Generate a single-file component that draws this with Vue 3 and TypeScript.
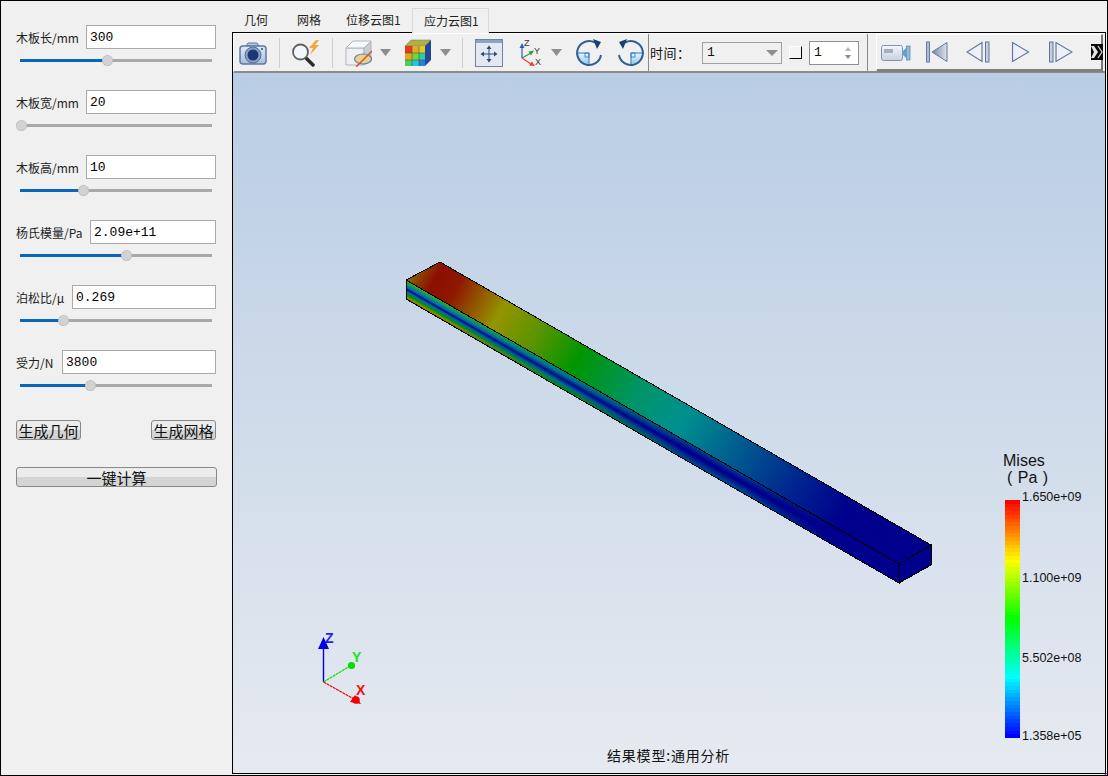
<script setup lang="ts">
interface Field { label: string; value: string; labelWidth: number; pos: number }
const fields: Field[] = [
  { label: '木板长/mm', value: '300', labelWidth: 70, pos: 87 },
  { label: '木板宽/mm', value: '20', labelWidth: 70, pos: 1 },
  { label: '木板高/mm', value: '10', labelWidth: 70, pos: 63 },
  { label: '杨氏模量/Pa', value: '2.09e+11', labelWidth: 74, pos: 106 },
  { label: '泊松比/μ', value: '0.269', labelWidth: 56, pos: 43 },
  { label: '受力/N', value: '3800', labelWidth: 46, pos: 70 },
]
const tabs = ['几何', '网格', '位移云图1', '应力云图1']
const bands: string[] = Array.from({ length: 64 }, (_, i) => `hsl(${Math.round((i / 63) * 240)}, 100%, 50%)`)
const ticks = [
  { text: '1.650e+09', top: 0 },
  { text: '1.100e+09', top: 81 },
  { text: '5.502e+08', top: 161 },
  { text: '1.358e+05', top: 239 },
]
</script>

<template>
  <div class="window">
    <aside class="side">
      <div v-for="f in fields" :key="f.label" class="field">
        <div class="row">
          <span class="lbl" :style="{ width: f.labelWidth + 'px' }">{{ f.label }}</span>
          <input class="inp" :value="f.value" readonly />
        </div>
        <div class="slider">
          <div class="fill" :style="{ width: f.pos + 'px' }"></div>
          <div class="thumb" :style="{ left: f.pos - 5 + 'px' }"></div>
        </div>
      </div>
      <div class="btns">
        <button class="btn">生成几何</button>
        <button class="btn">生成网格</button>
      </div>
      <button class="btn wide">一键计算</button>
    </aside>

    <main class="main">
      <div class="tabs">
        <div v-for="(t, i) in tabs" :key="t" class="tab" :class="{ active: i === 3 }">{{ t }}</div>
      </div>
      <div class="frame">
        <div class="toolbar">
          <svg class="ic ml5" width="28" height="26" viewBox="0 0 28 26">
            <defs><linearGradient id="cam" x1="0" y1="0" x2="0" y2="1"><stop offset="0" stop-color="#e2ebf6"/><stop offset="1" stop-color="#a8bedb"/></linearGradient></defs>
            <path d="M7 6 L9 3 H18 L20 6 Z" fill="#b9cbe2" stroke="#5f78a3"/>
            <rect x="1" y="6" width="26" height="18" rx="3" fill="url(#cam)" stroke="#5f78a3" stroke-width="1.5"/>
            <circle cx="14" cy="15" r="8" fill="#8aa0c6" stroke="#56709e"/>
            <circle cx="14" cy="15" r="5.5" fill="#1c3873"/>
            <circle cx="23" cy="9" r="1" fill="#2b4a80"/>
          </svg>
          <div class="sep ml12"></div>
          <svg class="ic ml12" width="28" height="28" viewBox="0 0 28 28">
            <line x1="14" y1="19" x2="21" y2="26" stroke="#2c2c2c" stroke-width="3.5" stroke-linecap="round"/>
            <circle cx="8.5" cy="13" r="7.5" fill="#f3f7fb" stroke="#606060" stroke-width="1.8"/>
            <polygon points="24,1 17,9 21,9 18,16 27,6 23,6 27,1" fill="#f3a83c"/>
          </svg>
          <div class="sep ml12"></div>
          <svg class="ic ml12" width="27" height="28" viewBox="0 0 27 28">
            <polygon points="1,9 19,9 19,26 1,26" fill="#eef0f3" stroke="#b0b4ba"/>
            <polygon points="1,9 8,2 26,2 19,9" fill="#f7f8fa" stroke="#b0b4ba"/>
            <polygon points="19,9 26,2 26,20 19,26" fill="#c6ccd6" stroke="#b0b4ba"/>
            <ellipse cx="18" cy="20" rx="8.5" ry="5" fill="#ead08a" stroke="#6b80a6" stroke-width="1.2"/>
            <line x1="11" y1="28" x2="27" y2="12" stroke="#d2502a" stroke-width="1.3"/>
          </svg>
          <svg class="ic ml8" width="11" height="7" viewBox="0 0 11 7"><polygon points="0,0 11,0 5.5,7" fill="#8e8e8e"/></svg>
          <svg class="ic ml13" width="27" height="28" viewBox="0 0 27 28">
            <polygon points="1,7 7,1 27,1 21,7" fill="#b3ae48" stroke="#6f7a4a" stroke-width="0.5"/>
            <polygon points="21,7 27,1 27,21 21,27" fill="#23469a"/>
            <rect x="1" y="7" width="7" height="7" fill="#e33a20"/>
            <rect x="8" y="7" width="7" height="7" fill="#e8a820"/>
            <rect x="15" y="7" width="6" height="7" fill="#dfcc22"/>
            <rect x="1" y="14" width="7" height="7" fill="#eda21e"/>
            <rect x="8" y="14" width="7" height="7" fill="#6fd63c"/>
            <rect x="15" y="14" width="6" height="7" fill="#2fcf9c"/>
            <rect x="1" y="21" width="7" height="6" fill="#44d25a"/>
            <rect x="8" y="21" width="7" height="6" fill="#2ec0e0"/>
            <rect x="15" y="21" width="6" height="6" fill="#2180e0"/>
            <path d="M8 7 V27 M15 7 V27 M1 14 H21 M1 21 H21" stroke="#3a4a3a" stroke-width="0.5"/>
          </svg>
          <svg class="ic ml9" width="11" height="7" viewBox="0 0 11 7"><polygon points="0,0 11,0 5.5,7" fill="#8e8e8e"/></svg>
          <div class="sep ml11"></div>
          <svg class="ic ml12" width="28" height="28" viewBox="0 0 28 28">
            <rect x="0.5" y="0.5" width="27" height="27" fill="#e4e9f1" stroke="#6e83a5"/>
            <rect x="1" y="1" width="26" height="3" fill="#8fa4c5"/>
            <path d="M14 9 V21 M8 15 H20" stroke="#284878" stroke-width="1"/>
            <polygon points="14,6.5 11.5,10 16.5,10" fill="#284878"/>
            <polygon points="14,23.5 11.5,20 16.5,20" fill="#284878"/>
            <polygon points="5.5,15 9,12.5 9,17.5" fill="#284878"/>
            <polygon points="22.5,15 19,12.5 19,17.5" fill="#284878"/>
          </svg>
          <svg class="ic ml16" width="24" height="28" viewBox="0 0 24 28">
            <line x1="3" y1="19" x2="3" y2="8" stroke="#2d5fb5" stroke-width="1.2"/>
            <polygon points="3,4 0.5,9 5.5,9" fill="#2d5fb5"/>
            <line x1="3" y1="19" x2="12" y2="14" stroke="#2f9a45" stroke-width="1.2"/>
            <polygon points="15,11.5 9.5,12.5 12,16.5" fill="#2f9a45"/>
            <line x1="3" y1="19" x2="12" y2="25" stroke="#e04040" stroke-width="1.2"/>
            <polygon points="16,27 10,26.5 13,22.5" fill="#e04040"/>
            <text x="5" y="7" class="ax">Z</text>
            <text x="15" y="15" class="ax">Y</text>
            <text x="16" y="26" class="ax">X</text>
          </svg>
          <svg class="ic ml8" width="11" height="7" viewBox="0 0 11 7"><polygon points="0,0 11,0 5.5,7" fill="#8e8e8e"/></svg>
          <svg class="ic ml14" width="26" height="28" viewBox="0 0 26 28">
            <defs><linearGradient id="rq" x1="0" y1="0" x2="0" y2="1"><stop offset="0" stop-color="#e9f5fc"/><stop offset="1" stop-color="#8cc8ec"/></linearGradient></defs>
            <path d="M1 14 H13 V26 A12 12 0 0 1 1 14 Z" fill="url(#rq)" stroke="#2f78c0" stroke-width="1"/>
            <path d="M25 16 A12 12 0 1 1 19 3.6" fill="none" stroke="#315f92" stroke-width="2"/>
            <polygon points="17,0 25,3 21,10" fill="#1c3f72"/>
            <rect x="9" y="14" width="4" height="4" fill="none" stroke="#2f78c0" stroke-width="0.8"/>
          </svg>
          <svg class="ic ml16" width="26" height="28" viewBox="0 0 26 28">
            <defs><linearGradient id="rq2" x1="0" y1="0" x2="0" y2="1"><stop offset="0" stop-color="#e9f5fc"/><stop offset="1" stop-color="#8cc8ec"/></linearGradient></defs>
            <path d="M25 14 H13 V26 A12 12 0 0 0 25 14 Z" fill="url(#rq2)" stroke="#2f78c0" stroke-width="1"/>
            <path d="M1 16 A12 12 0 1 0 7 3.6" fill="none" stroke="#315f92" stroke-width="2"/>
            <polygon points="9,0 1,3 5,10" fill="#1c3f72"/>
            <rect x="13" y="14" width="4" height="4" fill="none" stroke="#2f78c0" stroke-width="0.8"/>
          </svg>
          <div class="sep dark ml4"></div>
          <span class="time">时间：</span>
          <div class="combo"><span>1</span><svg width="12" height="6" viewBox="0 0 12 6"><polygon points="0,0 12,0 6,6" fill="#8e8e8e"/></svg></div>
          <div class="check"></div>
          <div class="spin">
            <span>1</span>
            <svg width="8" height="14" viewBox="0 0 8 14"><polygon points="4,1 7,5 1,5" fill="#b4b4b4"/><polygon points="4,13 7,9 1,9" fill="#8a8a8a"/></svg>
          </div>
          <div class="sep dark ml8"></div>
          <div class="toolbar2">
            <svg class="ml4" width="30" height="20" viewBox="0 0 30 20">
              <defs><linearGradient id="vc" x1="0" y1="0" x2="0" y2="1"><stop offset="0" stop-color="#f4f6f9"/><stop offset="1" stop-color="#c6d0df"/></linearGradient></defs>
              <rect x="0.5" y="3.5" width="21" height="15" rx="2" fill="url(#vc)" stroke="#7f92b0"/>
              <rect x="3" y="7" width="9" height="4" fill="#a3afc2"/>
              <polygon points="22,9 25,6 25,16 22,13" fill="#5aa2da"/>
              <rect x="25.5" y="4" width="3.5" height="14" fill="#8ebbe0" stroke="#5c7fa8" stroke-width="0.7"/>
            </svg>
            <svg class="ml15" width="22" height="22" viewBox="0 0 22 22">
              <defs><linearGradient id="g1" x1="0" y1="0" x2="1" y2="0"><stop offset="0" stop-color="#76869f"/><stop offset="1" stop-color="#dfe4ec"/></linearGradient></defs>
              <rect x="0.5" y="1" width="3" height="20" fill="#b1bdd2" stroke="#64799d"/>
              <polygon points="21,1.5 6,11 21,20.5" fill="url(#g1)" stroke="#64799d"/>
            </svg>
            <svg class="ml18" width="26" height="22" viewBox="0 0 26 22">
              <polygon points="16,1.5 1,11 16,20.5" fill="#edf0f5" stroke="#64799d" stroke-width="1.2"/>
              <rect x="19.5" y="1" width="3.5" height="20" fill="#c3cddd" stroke="#64799d"/>
            </svg>
            <svg class="ml19" width="19" height="22" viewBox="0 0 19 22">
              <polygon points="1.5,1.5 1.5,20.5 17.5,11" fill="#edf0f5" stroke="#64799d" stroke-width="1.2"/>
            </svg>
            <svg class="ml19" width="24" height="22" viewBox="0 0 24 22">
              <rect x="0.5" y="1" width="3.5" height="20" fill="#c3cddd" stroke="#64799d"/>
              <polygon points="7,1.5 7,20.5 23,11" fill="#edf0f5" stroke="#64799d" stroke-width="1.2"/>
            </svg>
            <svg class="ml18" width="12" height="18" viewBox="0 0 12 18">
              <rect x="0" y="1" width="12" height="16" fill="#0c0c0c"/>
              <path d="M0 3 H3 L7 9 L3 15 H0 L3 9 Z" fill="#e6e6e6"/>
              <path d="M7 3 L11 9 L7 15" fill="none" stroke="#d8d8d8" stroke-width="1.2"/>
            </svg>
          </div>
        </div>

        <div class="view">
          <svg class="scene" viewBox="233 73 872 700" width="872" height="700">
            <defs>
              <linearGradient id="topFace" gradientUnits="userSpaceOnUse" x1="406" y1="271" x2="915" y2="555">
                <stop offset="0" stop-color="#8a8a00"/>
                <stop offset="0.025" stop-color="#8c4000"/>
                <stop offset="0.05" stop-color="#8c0f00"/>
                <stop offset="0.09" stop-color="#8e1800"/>
                <stop offset="0.125" stop-color="#914c00"/>
                <stop offset="0.175" stop-color="#949400"/>
                <stop offset="0.25" stop-color="#5a9400"/>
                <stop offset="0.33" stop-color="#009600"/>
                <stop offset="0.45" stop-color="#009468"/>
                <stop offset="0.54" stop-color="#009090"/>
                <stop offset="0.66" stop-color="#00558f"/>
                <stop offset="0.76" stop-color="#00258f"/>
                <stop offset="0.86" stop-color="#00008c"/>
                <stop offset="1" stop-color="#00008c"/>
              </linearGradient>
              <linearGradient id="sideA" gradientUnits="userSpaceOnUse" x1="406" y1="280" x2="397.8" y2="294.3">
                <stop offset="0" stop-color="#6b9a00"/>
                <stop offset="0.18" stop-color="#00a060"/>
                <stop offset="0.36" stop-color="#1060b0"/>
                <stop offset="0.47" stop-color="#000a90"/>
                <stop offset="0.6" stop-color="#00709a"/>
                <stop offset="0.76" stop-color="#009200"/>
                <stop offset="0.9" stop-color="#8f9000"/>
                <stop offset="1" stop-color="#904000"/>
              </linearGradient>
              <linearGradient id="sideB" gradientUnits="userSpaceOnUse" x1="406" y1="280" x2="397.8" y2="294.3">
                <stop offset="0" stop-color="#009468"/>
                <stop offset="0.25" stop-color="#006c92"/>
                <stop offset="0.5" stop-color="#000a8c"/>
                <stop offset="0.72" stop-color="#006a90"/>
                <stop offset="1" stop-color="#009000"/>
              </linearGradient>
              <linearGradient id="sideC" gradientUnits="userSpaceOnUse" x1="406" y1="280" x2="397.8" y2="294.3">
                <stop offset="0" stop-color="#004c90"/>
                <stop offset="0.45" stop-color="#00008c"/>
                <stop offset="0.55" stop-color="#00008c"/>
                <stop offset="1" stop-color="#004c90"/>
              </linearGradient>
              <linearGradient id="fadeA" gradientUnits="userSpaceOnUse" x1="440" y1="0" x2="560" y2="0">
                <stop offset="0" stop-color="#fff"/><stop offset="1" stop-color="#000"/>
              </linearGradient>
              <linearGradient id="fadeB" gradientUnits="userSpaceOnUse" x1="560" y1="0" x2="690" y2="0">
                <stop offset="0" stop-color="#fff"/><stop offset="1" stop-color="#000"/>
              </linearGradient>
              <linearGradient id="fadeC" gradientUnits="userSpaceOnUse" x1="740" y1="0" x2="830" y2="0">
                <stop offset="0" stop-color="#fff"/><stop offset="1" stop-color="#000"/>
              </linearGradient>
              <mask id="mA" maskUnits="userSpaceOnUse" x="400" y="270" width="510" height="320"><rect x="400" y="270" width="510" height="320" fill="url(#fadeA)"/></mask>
              <mask id="mB" maskUnits="userSpaceOnUse" x="400" y="270" width="510" height="320"><rect x="400" y="270" width="510" height="320" fill="url(#fadeB)"/></mask>
              <mask id="mC" maskUnits="userSpaceOnUse" x="400" y="270" width="510" height="320"><rect x="400" y="270" width="510" height="320" fill="url(#fadeC)"/></mask>
            </defs>
            <polygon points="406,280 899,564 899,583 406,299" fill="#00008c"/>
            <polygon points="406,280 899,564 899,583 406,299" fill="url(#sideC)" mask="url(#mC)"/>
            <polygon points="406,280 899,564 899,583 406,299" fill="url(#sideB)" mask="url(#mB)"/>
            <polygon points="406,280 899,564 899,583 406,299" fill="url(#sideA)" mask="url(#mA)"/>
            <polygon points="406,280 899,564 899,583 406,299" fill="none" stroke="#000" class="edge"/>
            <polygon points="406,280 440,262 931,545 899,564" fill="url(#topFace)" stroke="#000" class="edge"/>
            <polygon points="899,564 931,545 931,565 899,583" fill="#00008c" stroke="#000" class="edge"/>

            <line x1="323.5" y1="682" x2="323.5" y2="646" stroke="#0000e6" stroke-width="1.4"/>
            <polygon points="323.5,637 318,649 329,649" fill="#0000e6"/>
            <line x1="323.5" y1="682" x2="350" y2="666" stroke="#00e000" stroke-width="1.2" stroke-dasharray="3 0.6"/>
            <circle cx="351.5" cy="665.5" r="3.6" fill="#00e000"/>
            <line x1="323.5" y1="682" x2="354" y2="699" stroke="#f00000" stroke-width="1.2" stroke-dasharray="3 0.6"/>
            <polygon points="361,704 350,702 355,695" fill="#f00000"/>
            <circle cx="356" cy="700" r="3.8" fill="#f00000"/>
            <text x="325" y="643" class="al" fill="#2020f0">Z</text>
            <text x="352" y="662" class="al" fill="#20e020">Y</text>
            <text x="356" y="695" class="al" fill="#f01010">X</text>
          </svg>

          <div class="legend">
            <div class="ltitle">Mises<br /><span class="lunit">( Pa )</span></div>
            <div class="lbody">
              <div class="bar">
                <div v-for="(c, i) in bands" :key="i" class="band" :style="{ background: c }"></div>
              </div>
              <span v-for="t in ticks" :key="t.text" class="tick" :style="{ top: t.top - 10 + 'px' }">{{ t.text }}</span>
            </div>
          </div>
          <div class="caption">结果模型:通用分析</div>
        </div>
      </div>
    </main>
    <svg class="corner" width="4" height="4" viewBox="0 0 4 4"><line x1="0" y1="4" x2="4" y2="0" stroke="#d020d0" stroke-width="1.2"/></svg>
  </div>
</template>

<style>
html, body { margin: 0; padding: 0; background: #f0f0f0; }
</style>

<style scoped>
.window {
  position: relative;
  width: 1108px;
  height: 776px;
  box-sizing: border-box;
  border: 1px solid #000;
  background: #f0f0f0;
  display: flex;
  overflow: hidden;
  font-family: "Noto Sans CJK SC", "Liberation Sans", sans-serif;
  color: #111;
}
.corner { position: absolute; right: -1px; bottom: -1px; }
.side {
  width: 231px;
  box-sizing: border-box;
  padding: 24px 15px 0;
  flex: none;
}
.field { height: 65px; margin-right: 1px; }
.row { display: flex; align-items: center; height: 24px; }
.lbl { font-size: 12px; flex: none; white-space: nowrap; color: #222; }
.inp {
  flex: 1;
  min-width: 0;
  height: 24px;
  box-sizing: border-box;
  border: 1px solid #a9a9a9;
  background: #fff;
  padding: 0 3px;
  margin: 0;
  outline: none;
  border-radius: 0;
  font-family: "Liberation Mono", monospace;
  font-size: 13px;
  color: #000;
}
.slider {
  position: relative;
  height: 3px;
  margin: 10px 4px 0;
  background: #a8a8a8;
}
.fill { height: 3px; background: #0a64b8; }
.thumb {
  position: absolute;
  top: -4px;
  width: 11px;
  height: 11px;
  box-sizing: border-box;
  border-radius: 50%;
  background: #d2d2d2;
  border: 1px dotted #b0b0b0;
}
.btns { display: flex; justify-content: space-between; margin-top: 5px; margin-right: 1px; }
.btn {
  height: 20px;
  width: 65px;
  padding: 0;
  box-sizing: border-box;
  border: 1px solid #8a8a8a;
  border-radius: 3px;
  background: linear-gradient(#ececec 0 50%, #d4d4d4 50% 100%);
  font-family: "Noto Sans CJK SC", sans-serif;
  font-size: 15px;
  line-height: 17px;
  color: #111;
  white-space: nowrap;
  overflow: hidden;
}
.wide { display: block; width: 201px; margin-top: 27px; }

.main {
  flex: 1;
  min-width: 0;
  display: flex;
  flex-direction: column;
  margin-right: 1px;
  margin-bottom: 1px;
}
.tabs {
  height: 31px;
  flex: none;
  display: flex;
  align-items: flex-end;
  gap: 1px;
  font-size: 12px;
}
.tab {
  height: 24px;
  line-height: 24px;
  padding: 0 12px;
  box-sizing: border-box;
  white-space: nowrap;
  color: #222;
  width: 77px;
  text-align: center;
}
.tab:nth-child(1) { width: 48px; margin-right: 4px; }
.tab:nth-child(2) { width: 48px; }
.tab.active {
  position: relative;
  z-index: 2;
  height: 25px;
  margin-bottom: -1px;
  background: #f0f0f0;
  border: 1px solid #d9d9d9;
  border-bottom: none;
  padding: 0 11px;
}
.frame {
  flex: 1;
  min-height: 0;
  border: 1px solid #000;
  display: flex;
  flex-direction: column;
}
.toolbar {
  height: 40px;
  flex: none;
  box-sizing: border-box;
  border-top: 1px solid #fff;
  border-left: 1px solid #fff;
  border-bottom: 2px solid #8c8c8c;
  display: flex;
  align-items: center;
  background: #f0f0f0;
}
.ic { flex: none; display: block; }
.ml4 { margin-left: 4px; }
.ml5 { margin-left: 5px; }
.ml8 { margin-left: 8px; }
.ml9 { margin-left: 9px; }
.ml11 { margin-left: 11px; }
.ml12 { margin-left: 12px; }
.ml13 { margin-left: 13px; }
.ml14 { margin-left: 14px; }
.ml15 { margin-left: 15px; }
.ml16 { margin-left: 16px; }
.ml18 { margin-left: 18px; }
.ml19 { margin-left: 19px; }
.sep { width: 1px; height: 30px; background: #cfcfcf; flex: none; }
.sep.dark { height: 37px; background: #8a8a8a; }
.ax { font: 9px "Liberation Sans", sans-serif; fill: #333; }
.time { margin-left: 1px; width: 52px; flex: none; font-size: 13px; letter-spacing: 0.5px; white-space: nowrap; }
.combo {
  width: 80px;
  height: 22px;
  box-sizing: border-box;
  border: 1px solid #a0a0a0;
  display: flex;
  align-items: center;
  justify-content: space-between;
  padding: 0 3px 0 4px;
  flex: none;
  font: 13px "Liberation Mono", monospace;
  background: #f0f0f0;
}
.check {
  width: 13px;
  height: 13px;
  margin-left: 7px;
  box-sizing: border-box;
  flex: none;
  background: #f4f4f4;
  border-right: 1px solid #000;
  border-bottom: 1px solid #000;
  border-top: 1px solid #fff;
  border-left: 1px solid #fff;
}
.spin {
  width: 50px;
  height: 24px;
  margin-left: 7px;
  box-sizing: border-box;
  flex: none;
  border: 1px solid #909090;
  background: #fff;
  display: flex;
  align-items: center;
  justify-content: space-between;
  padding: 0 6px 0 4px;
  font: 13px "Liberation Mono", monospace;
}
.toolbar2 {
  margin-left: 8px;
  width: 227px;
  height: 38px;
  box-sizing: border-box;
  flex: none;
  border-left: 1px solid #fff;
  border-top: 1px solid #fff;
  border-right: 2px solid #777;
  border-bottom: 3px solid #808080;
  display: flex;
  align-items: center;
}
.toolbar2 svg { flex: none; display: block; }
.view {
  position: relative;
  flex: 1;
  min-height: 0;
  background: linear-gradient(#b9cde4, #e6eaf0);
  overflow: hidden;
}
.scene { position: absolute; left: 0; top: 0; display: block; }
.edge { shape-rendering: crispEdges; stroke-width: 1; }
.al { font: bold 14px "Liberation Sans", sans-serif; }
.legend { position: absolute; left: 770px; top: 379px; }
.ltitle {
  font-family: "Liberation Sans", sans-serif;
  font-size: 16px;
  line-height: 17px;
  color: #111;
  height: 48px;
}
.lunit { margin-left: 4px; word-spacing: 1px; }
.lbody { position: relative; margin-left: 2px; }
.bar { width: 15px; height: 238px; display: flex; flex-direction: column; }
.band { flex: 1; }
.tick {
  position: absolute;
  left: 17px;
  font-family: "Liberation Sans", sans-serif;
  font-size: 12.5px;
  line-height: 14px;
  white-space: nowrap;
  color: #111;
}
.caption {
  position: absolute;
  left: 374px;
  top: 672px;
  font-size: 14px;
  letter-spacing: 0.8px;
  line-height: 20px;
  color: #111;
  white-space: nowrap;
}
</style>
